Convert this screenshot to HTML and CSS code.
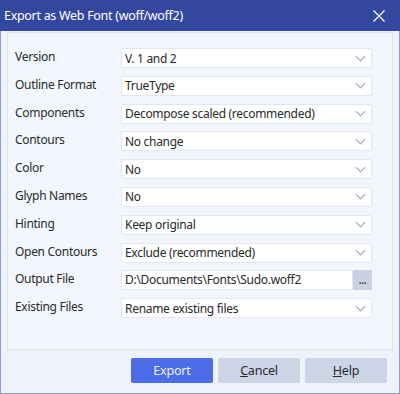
FILE: index.html
```html
<!DOCTYPE html>
<html lang="en">
<head>
    <meta charset="UTF-8">
    <title>Export as Web Font</title>
    <link rel="stylesheet" href="styles.css">
</head>
<body>
    <div class="window">
        <div class="titlebar">
            <span class="title">Export as Web Font (woff/woff2)</span>
            <svg class="close" width="14" height="14" viewBox="0 0 14 14">
                <path d="M1.5 1.5 L12.5 12.5 M12.5 1.5 L1.5 12.5" stroke="#fff" stroke-width="1.3" fill="none"/>
            </svg>
        </div>
        <div class="panel">
            <div class="form">
                <label>Version</label>
                <div class="select"><span>V. 1 and 2</span><i class="chev"></i></div>
                <label>Outline Format</label>
                <div class="select"><span>TrueType</span><i class="chev"></i></div>
                <label>Components</label>
                <div class="select"><span>Decompose scaled (recommended)</span><i class="chev"></i></div>
                <label>Contours</label>
                <div class="select"><span>No change</span><i class="chev"></i></div>
                <label>Color</label>
                <div class="select"><span>No</span><i class="chev"></i></div>
                <label>Glyph Names</label>
                <div class="select"><span>No</span><i class="chev"></i></div>
                <label>Hinting</label>
                <div class="select"><span>Keep original</span><i class="chev"></i></div>
                <label>Open Contours</label>
                <div class="select"><span>Exclude (recommended)</span><i class="chev"></i></div>
                <label>Output File</label>
                <div class="file">
                    <div class="input">D:\Documents\Fonts\Sudo.woff2</div>
                    <div class="browse">...</div>
                </div>
                <label>Existing Files</label>
                <div class="select"><span>Rename existing files</span><i class="chev"></i></div>
            </div>
        </div>
        <div class="buttons">
            <button class="primary">Export</button>
            <button><u>C</u>ancel</button>
            <button><u>H</u>elp</button>
        </div>
    </div>
</body>
</html>
```

FILE: styles.css
```css
body {
    margin: 0;
    font-family: "Noto Sans", "Open Sans", sans-serif;
    font-size: 12px;
    letter-spacing: -0.3px;
    color: #2a2a2a;
}

.window {
    box-sizing: border-box;
    width: 400px;
    height: 394px;
    border: 1px solid #8d9bd6;
    border-top: none;
    background-color: #eef3fb;
    display: flex;
    flex-direction: column;
}

.titlebar {
    height: 31px;
    margin: 0 -1px;
    background-color: #3447a0;
    color: #ffffff;
    display: flex;
    align-items: center;
    justify-content: space-between;
    padding: 0 14px 0 4px;
}

.title {
    font-size: 12.5px;
}

.panel {
    box-sizing: border-box;
    margin: 1px 6px 0 6px;
    height: 318px;
    border: 1px solid #dde4f0;
    background-color: #f3f7fd;
    padding: 15px 20px 0 7px;
}

.form {
    display: grid;
    grid-template-columns: 106px 1fr;
    grid-auto-rows: 20px;
    row-gap: 7.8px;
    align-items: center;
}

.form label {
    line-height: 18px;
    margin-top: -2px;
}

.select, .file {
    box-sizing: border-box;
    height: 20px;
    display: flex;
    align-items: center;
}

.select {
    background-color: #ffffff;
    border: 1px solid #e1e7f2;
    border-radius: 2px;
    padding: 0 0 0 3px;
    justify-content: space-between;
}

.chev {
    width: 6px;
    height: 6px;
    border-right: 1.3px solid #9aa3bf;
    border-bottom: 1.3px solid #9aa3bf;
    transform: rotate(45deg);
    margin: -4px 7px 0 0;
}

.input {
    box-sizing: border-box;
    flex: 1;
    height: 20px;
    background-color: #ffffff;
    border: 1px solid #e1e7f2;
    border-radius: 2px 0 0 2px;
    padding-left: 3px;
    line-height: 18px;
}

.browse {
    width: 19px;
    height: 20px;
    background-color: #c9d1e3;
    text-align: center;
    font-size: 10px;
    font-weight: bold;
    line-height: 20px;
    color: #444;
}

.buttons {
    display: flex;
    justify-content: flex-end;
    gap: 5px;
    margin: 8px 12px 0 0;
}

button {
    width: 82px;
    height: 25px;
    border: none;
    border-radius: 2px;
    background-color: #ccd4e5;
    color: #2a2a2a;
    font-family: "Noto Sans", "Open Sans", sans-serif;
    font-size: 12.5px;
    letter-spacing: -0.2px;
    padding: 0;
}

button.primary {
    background-color: #4d6ce8;
    color: #eef1ff;
}
```
